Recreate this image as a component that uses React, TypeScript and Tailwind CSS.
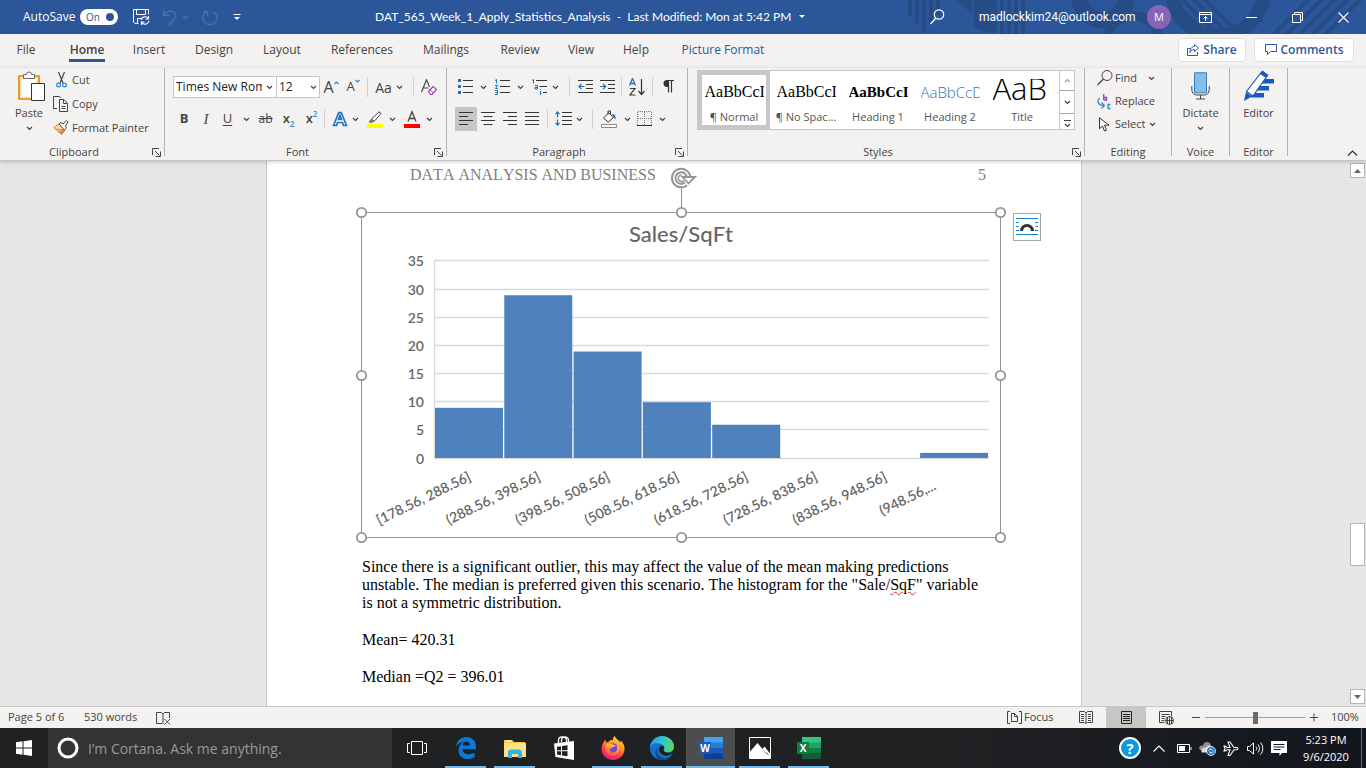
import { useState, type ReactNode } from "react";

/* ---------- small building blocks ---------- */

type IconProps = { w: number; h: number; children: ReactNode; className?: string };

function Icon({ w, h, children, className = "" }: IconProps) {
  return (
    <svg width={w} height={h} viewBox={`0 0 ${w} ${h}`} fill="none" aria-hidden="true" className={`block shrink-0 ${className}`}>
      {children}
    </svg>
  );
}

function Chevron({ className = "" }: { className?: string }) {
  return (
    <Icon w={7} h={5} className={className}>
      <path d="M1 1l2.5 2.5L6 1" stroke="currentColor" strokeWidth="1.2" />
    </Icon>
  );
}

function Tool({ label, className, children }: { label: string; className: string; children?: ReactNode }) {
  return (
    <button type="button" aria-label={label} className={`flex h-6 shrink-0 items-center justify-center ${className}`}>
      {children}
    </button>
  );
}

function Drop({ label, className = "w-5" }: { label: string; className?: string }) {
  return (
    <Tool label={label} className={className}>
      <Chevron />
    </Tool>
  );
}

function Sep({ className = "" }: { className?: string }) {
  return <span className={`h-5 w-px shrink-0 bg-[#d2d0ce] ${className}`} />;
}

function Group({ name, className, launcher, children }: { name: string; className: string; launcher?: boolean; children: ReactNode }) {
  return (
    <section aria-label={name} className={`flex h-[88px] shrink-0 flex-col border-r border-[#b5b3b1] ${className}`}>
      <div className="h-[76px] shrink-0">{children}</div>
      <div className={`relative flex h-4 shrink-0 items-center justify-center text-[11px] text-[#444] ${launcher ? "pr-4" : ""}`}>
        {name}
        {launcher && (
          <button type="button" aria-label={`${name} settings`} className="absolute right-[3px] top-1">
            <Icon w={9} h={9}>
              <path d="M.5 7V.5H7M3 3l4.500 4.500M8.500 3.500v5h-5" stroke="#444" />
            </Icon>
          </button>
        )}
      </div>
    </section>
  );
}

/* ---------- title bar ---------- */

function TitleBar() {
  const [autoSave, setAutoSave] = useState(true);
  return (
    <header className="relative flex h-[34px] shrink-0 items-center overflow-hidden bg-[#2b579a] text-[12px] text-white">
      <svg className="absolute right-0 top-0" width="466" height="34" fill="none" aria-hidden="true">
        <g fill="#264c86">
          <path d="M8 0h4v16H8zM15 0h4v23h-4zM22 0h4v32h-4zM29 0h4v24h-4zM36 0h4v15h-4zM56 0h16v14zM74 0h23v34c-9-1-16-3-23-8z" />
          <path d="M100 0h4v34h-4zM107 0h4v34h-4zM114 0h4v34h-4zM121 0h4v34h-4z" />
        </g>
        <g stroke="#264c86">
          <circle cx="203" cy="-4" r="24" strokeWidth="16" />
          <circle cx="233" cy="42" r="26" strokeWidth="9" />
          <circle cx="318" cy="-10" r="46" strokeWidth="14" />
          <path d="M270-2l40 40M281-2l40 40M292-2l40 40M303-2l36 36M372 36l38-38M385 36l38-38M398 36l38-38M411 36l38-38M424 36l38-38" strokeWidth="4" />
        </g>
      </svg>
      <label className="relative flex items-center pl-[23px]">
        <span className="w-[57px]">AutoSave</span>
        <input type="checkbox" checked={autoSave} onChange={() => setAutoSave(!autoSave)} className="sr-only" />
        <span className="flex h-4 w-[38px] items-center justify-between rounded-full bg-white pl-1.5 pr-1 text-[10px] text-[#2b579a]">
          {autoSave ? "On" : "Off"}
          <span className="size-2 rounded-full bg-[#2b579a]" />
        </span>
      </label>
      <div className="relative flex w-[257px] items-center">
        <button type="button" aria-label="Save" className="ml-[15px]">
          <Icon w={17} h={18}>
            <path d="M15.500 6.500v-5H.500V14l1.500 1.500h3.500M3.500 1.500v5h9v-5M4.500 15.500v-5H8" stroke="#fff" />
            <path d="M8 12a4 4 0 0 1 7.200-1.500M15.500 8v3h-3M16 13a4 4 0 0 1-7.200 1.500M8.500 17v-3h3" stroke="#fff" strokeWidth="1.200" />
          </Icon>
        </button>
        <button type="button" aria-label="Undo" className="ml-3 text-[#4a72ae]">
          <Icon w={16} h={17}>
            <path d="M1.500 1v5.500H7M1.500 6.500C4 3 7 1.500 10 2.200c4 1 5 5.500 2 8.500L7 16" stroke="currentColor" strokeWidth="1.300" />
          </Icon>
        </button>
        <Chevron className="ml-1 text-[#4a72ae]" />
        <button type="button" aria-label="Redo" className="ml-3 text-[#4a72ae]">
          <Icon w={18} h={17}>
            <path d="M5 3a7 7 0 1 0 8 0M2 2.500h4.500V7" stroke="currentColor" strokeWidth="1.300" />
          </Icon>
        </button>
        <button type="button" aria-label="Customize quick access" className="ml-[14px]">
          <Icon w={8} h={7}>
            <path d="M.500.500h7" stroke="#fff" />
            <path d="M1 3h6L4 6z" fill="#fff" />
          </Icon>
        </button>
      </div>
      <button type="button" className="relative flex items-center whitespace-pre font-['Lato',sans-serif]">
        <span>DAT_565_Week_1_Apply_Statistics_Analysis  -  Last Modified: Mon at 5:42 PM</span>
        <Icon w={6} h={4} className="ml-2">
          <path d="M0 0h6L3 3z" fill="#fff" />
        </Icon>
      </button>
      <div className="relative ml-auto flex items-center">
        <button type="button" aria-label="Search" className="w-[49px]">
          <Icon w={15} h={16}>
            <circle cx="9" cy="5.500" r="4.700" stroke="#fff" strokeWidth="1.200" />
            <path d="M5.700 9.200L.500 15" stroke="#fff" strokeWidth="1.300" />
          </Icon>
        </button>
        <span className="w-[168px] font-['Roboto',sans-serif]">madlockkim24@outlook.com</span>
        <button type="button" aria-label="Account" className="flex size-6 items-center justify-center rounded-full bg-[#8764b8] text-[11px]">
          M
        </button>
        <button type="button" aria-label="Ribbon display options" className="ml-7">
          <Icon w={13} h={11}>
            <path d="M.500.500h12v10H.500zM.500 2.500h12M6.500 9V4.500M4.500 6.500l2-2 2 2" stroke="#fff" />
          </Icon>
        </button>
        <button type="button" aria-label="Minimize" className="ml-[34px]">
          <Icon w={11} h={11}>
            <path d="M0 5.500h11" stroke="#fff" />
          </Icon>
        </button>
        <button type="button" aria-label="Restore" className="ml-[35px]">
          <Icon w={11} h={11}>
            <path d="M.500 2.500h8v8h-8zM2.500 2.500v-2h8v8h-2" stroke="#fff" />
          </Icon>
        </button>
        <button type="button" aria-label="Close" className="ml-[35px] mr-[17px]">
          <Icon w={11} h={11}>
            <path d="M.500.500l10 10M10.500.500l-10 10" stroke="#fff" strokeWidth="1.100" />
          </Icon>
        </button>
      </div>
    </header>
  );
}

/* ---------- tabs ---------- */

const TABS = [
  { name: "File", width: "w-[52px]" },
  { name: "Home", width: "w-[70px]" },
  { name: "Insert", width: "w-[54px]" },
  { name: "Design", width: "w-[76px]" },
  { name: "Layout", width: "w-[60px]" },
  { name: "References", width: "w-[100px]" },
  { name: "Mailings", width: "w-[68px]" },
  { name: "Review", width: "w-[80px]" },
  { name: "View", width: "w-[42px]" },
  { name: "Help", width: "w-[68px]" },
  { name: "Picture Format", width: "w-[106px]" },
];

function Tabs() {
  return (
    <nav className="flex h-[34px] shrink-0 items-center text-[12px] text-[#444]">
      {TABS.map((t) => (
        <button key={t.name} type="button" className={`flex h-7 shrink-0 justify-center ${t.width}`}>
          <span
            className={
              t.name === "Home"
                ? "h-[25px] border-b-[3px] border-[#2b579a] px-px pt-1 font-semibold leading-[18px]"
                : t.name === "Picture Format"
                  ? "pt-1 leading-[18px] text-[#2b579a]"
                  : "pt-1 leading-[18px]"
            }
          >
            {t.name}
          </span>
        </button>
      ))}
      <div className="ml-auto mr-3 flex gap-2 pb-0.5 font-semibold text-[#2b579a]">
        <button type="button" className="flex h-6 w-[68px] items-center justify-center gap-1 rounded-sm border border-[#e1dfdd] bg-white">
          <Icon w={12} h={12}>
            <path d="M3.500 4.500h-3v7h10V8M7.500.500L11.500 4l-4 3.500V5.500C5 5.500 4 6.500 3 8.500 3 5 4.500 2.500 7.500 2.500z" stroke="currentColor" />
          </Icon>
          Share
        </button>
        <button type="button" className="flex h-6 w-[100px] items-center justify-center gap-1 rounded-sm border border-[#e1dfdd] bg-white">
          <Icon w={12} h={12}>
            <path d="M.500.500h11v7h-6l-3 3v-3h-2z" stroke="currentColor" />
          </Icon>
          Comments
        </button>
      </div>
    </nav>
  );
}

/* ---------- ribbon groups ---------- */

function ClipboardGroup() {
  return (
    <Group name="Clipboard" className="w-[165px]" launcher>
      <div className="flex">
        <button type="button" className="ml-[11px] flex w-9 flex-col items-center pt-[3px]">
          <Icon w={29} h={31} className="ml-1">
            <path d="M2 5h20v23H2z" fill="#fbe6b0" stroke="#e8830c" strokeWidth="1.600" />
            <path d="M5 8h14v18H5z" fill="#fff" />
            <path d="M6.500 7.500v-4h3a2.500 2.500 0 0 1 5 0h3v4z" fill="#fff" stroke="#666" />
            <path d="M14.500 12.500h13v17h-13z" fill="#fff" stroke="#333" />
          </Icon>
          <span className="mt-[3px] h-4 leading-4">Paste</span>
          <Chevron className="mt-[5px]" />
        </button>
        <div className="ml-1.5 flex flex-col">
          <button type="button" className="flex h-6 items-center">
            <span className="w-[19px] pl-[3px]">
              <Icon w={11} h={16}>
                <path d="M2.500 0l4.700 11.500M8.500 0L3.800 11.500" stroke="#444" strokeWidth="1.200" />
                <circle cx="2.500" cy="13" r="1.900" stroke="#2b88d8" strokeWidth="1.200" />
                <circle cx="8.500" cy="13" r="1.900" stroke="#2b88d8" strokeWidth="1.200" />
              </Icon>
            </span>
            Cut
          </button>
          <button type="button" className="flex h-6 items-center">
            <span className="w-[19px]">
              <Icon w={16} h={16}>
                <path d="M4 12.500H.500V.500h6l1.500 1.500M11 3.500H6.500v12h8v-8zM10.500 3.500v4h4M8.500 10.500h4M8.500 12.500h4" stroke="#444" />
              </Icon>
            </span>
            Copy
          </button>
          <button type="button" className="flex h-6 items-center">
            <span className="w-[19px]">
              <Icon w={16} h={16}>
                <path d="M.800 7.500L6 4l6 6-3.500 4.500z" fill="#fbdcae" stroke="#e07b12" />
                <path d="M3.500 9l5.500 1M5.500 11.500l3.500.500M8.500 14.500L12 10 8 10z" stroke="#e07b12" fill="#f0963c" />
                <path d="M6 4l2-1.500 2 1.500L13.500.800l1.500 1L12.500 6l.800 2-2 2z" fill="#fff" stroke="#444" />
              </Icon>
            </span>
            Format Painter
          </button>
        </div>
      </div>
    </Group>
  );
}

function FontGroup() {
  return (
    <Group name="Font" className="w-[282px]" launcher>
      <div className="mt-[7px] flex h-6 items-center pl-2">
        <label className="relative block h-[22px] w-[104px] shrink-0">
          <span className="sr-only">Font name</span>
          <select className="block h-[22px] w-full appearance-none border border-[#c8c6c4] bg-white pl-0.5 pr-3.5 text-[12px] leading-5 text-[#222]">
            <option>Times New Roman</option>
          </select>
          <Chevron className="absolute right-1 top-[9px]" />
        </label>
        <label className="relative -ml-px block h-[22px] w-11 shrink-0">
          <span className="sr-only">Font size</span>
          <select className="block h-[22px] w-full appearance-none border border-[#c8c6c4] bg-white pl-0.5 pr-3.5 text-[12px] leading-5 text-[#222]">
            <option>12</option>
          </select>
          <Chevron className="absolute right-[3px] top-[9px]" />
        </label>
        <Tool label="Increase font size" className="ml-[3px] w-4 text-[16px]">
          A
          <Icon w={5} h={4} className="-mt-2">
            <path d="M.500 3L2.500 1l2 2" stroke="#2b88d8" strokeWidth="1.200" />
          </Icon>
        </Tool>
        <Tool label="Decrease font size" className="ml-1.5 w-4 text-[13px]">
          A
          <Icon w={5} h={4} className="-mt-3">
            <path d="M.500 1L2.500 3l2-2" stroke="#2b88d8" strokeWidth="1.200" />
          </Icon>
        </Tool>
        <Sep className="ml-1.5" />
        <Tool label="Change case" className="ml-[7px] w-[17px] text-[14px]">Aa</Tool>
        <Drop label="Change case options" className="ml-px w-3" />
        <Sep className="ml-2" />
        <Tool label="Clear formatting" className="ml-[7px] w-4">
          <Icon w={16} h={16}>
            <path d="M.500 13L5.500.800 8.500 8M2.200 9h5" stroke="#444" strokeWidth="1.200" />
            <path d="M7.500 12.500L12 7.500l3.500 3-4.500 5H9.500z" fill="#fff" stroke="#9b3fb5" strokeWidth="1.200" />
            <path d="M9 10.500l3.500 3.500" stroke="#9b3fb5" />
          </Icon>
        </Tool>
      </div>
      <div className="mt-2 flex h-6 items-center pl-2">
        <Tool label="Bold" className="w-[22px] text-[13px] font-bold">B</Tool>
        <Tool label="Italic" className="w-[22px] font-['Liberation_Serif',serif] text-[15px] italic">I</Tool>
        <Tool label="Underline" className="w-[21px] text-[13px] underline underline-offset-2">U</Tool>
        <Drop label="Underline options" className="w-4" />
        <Tool label="Strikethrough" className="w-[23px] text-[12px] line-through">ab</Tool>
        <Tool label="Subscript" className="w-[23px] text-[13px] font-semibold">
          x<span className="mt-2.5 text-[8px] text-[#2b88d8]">2</span>
        </Tool>
        <Tool label="Superscript" className="w-[23px] text-[13px] font-semibold">
          x<span className="-mt-2.5 text-[8px] text-[#2b88d8]">2</span>
        </Tool>
        <Sep className="ml-px" />
        <Tool label="Text effects" className="ml-[7px] w-4">
          <Icon w={16} h={16}>
            <path d="M1.500 14.500L6.800 1.500h2.400l5.300 13h-3l-1-3h-5l-1 3zM6.500 8.500h3L8 4.500z" fill="#fff" stroke="#1e73be" strokeWidth="1.700" />
          </Icon>
        </Tool>
        <Drop label="Text effects options" className="w-3.5" />
        <Tool label="Highlight" className="ml-[5px] w-4">
          <Icon w={16} h={18}>
            <path d="M0 14h16v4H0z" fill="#ffff00" />
            <path d="M2.500 12L5 8.500 12 1.800l2 1.500L8 10.500 5 12z" fill="#fff" stroke="#444" />
            <path d="M2 12.500L5 8.500l2.500 2.500L5 12.500z" fill="#777" />
          </Icon>
        </Tool>
        <Drop label="Highlight colors" className="w-[18px]" />
        <Tool label="Font color" className="ml-[3px] w-4">
          <Icon w={16} h={18}>
            <path d="M0 14h16v4H0z" fill="#ff0000" />
            <path d="M4 11.500L8 1.800l4 9.700M5.200 8.500h5.600" stroke="#444" strokeWidth="1.300" />
          </Icon>
        </Tool>
        <Drop label="Font colors" className="w-[18px]" />
      </div>
    </Group>
  );
}

const ALIGN = {
  left: "M0 .500h14M0 4.500h9M0 8.500h14M0 12.500h9",
  center: "M0 .500h14M2.500 4.500h9M0 8.500h14M2.500 12.500h9",
  right: "M0 .500h14M5 4.500h9M0 8.500h14M5 12.500h9",
  justify: "M0 .500h14M0 4.500h14M0 8.500h14M0 12.500h14",
};

function AlignIcon({ d }: { d: string }) {
  return (
    <Icon w={14} h={14}>
      <path d={d} stroke="#333" />
    </Icon>
  );
}

function ParagraphGroup() {
  return (
    <Group name="Paragraph" className="w-[241px]" launcher>
      <div className="mt-[7px] flex h-6 items-center pl-[11px]">
        <Tool label="Bullets" className="w-[15px]">
          <Icon w={15} h={16}>
            <path d="M0 0h3v3H0zM0 6h3v3H0zM0 12h3v3H0z" fill="#1e73be" />
            <path d="M5 1.500h10M5 7.500h10M5 13.500h10" stroke="#333" />
          </Icon>
        </Tool>
        <Drop label="Bullet options" />
        <Tool label="Numbering" className="ml-0.5 w-[15px]">
          <Icon w={15} h={16}>
            <path d="M0 1.500L1.500.500v4M0 6.500h2.500L.500 9.500h2.500M0 11.500h2.500v4H0M.500 13.500h2" stroke="#1e73be" />
            <path d="M5 1.500h10M5 7.500h10M5 13.500h10" stroke="#333" />
          </Icon>
        </Tool>
        <Drop label="Numbering options" />
        <Tool label="Multilevel list" className="ml-0.5 w-[15px]">
          <Icon w={15} h={16}>
            <path d="M0 1.500L1.500.500v4M3 6.500h2.500v3.500H3V8.500h2M8.500 12v4M8.500 10v1" stroke="#1e73be" />
            <path d="M4 1.500h11M7.500 7.500H15M11 13.500h4" stroke="#333" />
          </Icon>
        </Tool>
        <Drop label="Multilevel options" className="w-4" />
        <Sep className="ml-1.5" />
        <Tool label="Decrease indent" className="ml-2 w-[15px]">
          <Icon w={15} h={14}>
            <path d="M0 .500h15M8 4.500h7M8 8.500h7M0 12.500h15" stroke="#333" />
            <path d="M6.500 6.500H.800M3.500 4L.800 6.500 3.500 9" stroke="#1e73be" strokeWidth="1.200" />
          </Icon>
        </Tool>
        <Tool label="Increase indent" className="ml-[7px] w-[15px]">
          <Icon w={15} h={14}>
            <path d="M0 .500h15M8 4.500h7M8 8.500h7M0 12.500h15" stroke="#333" />
            <path d="M0 6.500h5.700M3 4l2.700 2.500L3 9" stroke="#1e73be" strokeWidth="1.200" />
          </Icon>
        </Tool>
        <Sep className="ml-1.5" />
        <Tool label="Sort" className="ml-[7px] w-[17px]">
          <Icon w={17} h={18}>
            <path d="M.500 7.500L3.500.500l3 7M1.500 5.500h4" stroke="#1e73be" strokeWidth="1.300" />
            <path d="M1 10.500h5L1 17h5.500" stroke="#333" strokeWidth="1.200" />
            <path d="M12.500 1v15.500M9.500 13l3 3.500 3-3.500" stroke="#333" strokeWidth="1.200" />
          </Icon>
        </Tool>
        <Sep className="ml-1.5" />
        <Tool label="Show formatting marks" className="ml-2.5 w-[11px]">
          <Icon w={11} h={14}>
            <path d="M5.500.500v12M8.500.500v12M4 .500h7" stroke="#333" strokeWidth="1.200" />
            <path d="M5.500 0H4a3.400 3.400 0 0 0 0 7h1.500z" fill="#333" />
          </Icon>
        </Tool>
      </div>
      <div className="mt-2 flex h-6 items-center pl-2">
        <Tool label="Align left" className="w-[22px] bg-[#c8c6c4]"><AlignIcon d={ALIGN.left} /></Tool>
        <Tool label="Center" className="w-[22px]"><AlignIcon d={ALIGN.center} /></Tool>
        <Tool label="Align right" className="w-[22px]"><AlignIcon d={ALIGN.right} /></Tool>
        <Tool label="Justify" className="w-[22px]"><AlignIcon d={ALIGN.justify} /></Tool>
        <Sep className="ml-1" />
        <Tool label="Line spacing" className="ml-[7px] w-[17px]">
          <Icon w={17} h={16}>
            <path d="M7 1.500h10M7 5.500h10M7 9.500h10M7 13.500h10" stroke="#333" />
            <path d="M2.500 6.500V1M.500 3.200L2.500 1l2 2.200M2.500 8.500V14M.500 11.800l2 2.200 2-2.200" stroke="#1e73be" strokeWidth="1.200" />
          </Icon>
        </Tool>
        <Drop label="Line spacing options" className="w-3.5" />
        <Sep className="ml-1.5" />
        <Tool label="Shading" className="ml-[7px] w-[17px]">
          <Icon w={16} h={18}>
            <path d="M.500 14.500h15v3H.500z" fill="#fff" stroke="#8a8886" />
            <path d="M2.500 8L8 2.700l4.200 5-5 4.300zM7 4.500V1h2.500v3.500" stroke="#333" fill="#fff" />
            <path d="M11 4c3 0 4 2 3.500 5.500l-2-2.500z" fill="#1e73be" />
          </Icon>
        </Tool>
        <Drop label="Shading colors" />
        <Tool label="Borders" className="w-[15px]">
          <Icon w={15} h={16}>
            <path d="M.500 14V.500h14V14M7.500 1v13M1 7.500h13" stroke="#777" strokeDasharray="1 1" />
            <path d="M0 14.500h15" stroke="#333" />
          </Icon>
        </Tool>
        <Drop label="Border options" />
      </div>
    </Group>
  );
}

const STYLES = [
  { name: "¶ Normal", sample: "AaBbCcI", look: "font-['Liberation_Serif',serif] text-[16px] text-black" },
  { name: "¶ No Spac...", sample: "AaBbCcI", look: "font-['Liberation_Serif',serif] text-[16px] text-black" },
  { name: "Heading 1", sample: "AaBbCcI", look: "font-['Liberation_Serif',serif] text-[15px] font-bold text-black" },
  { name: "Heading 2", sample: "AaBbCcD", look: "font-['Open_Sans',sans-serif] text-[15px] font-light text-[#2e74b5]" },
  { name: "Title", sample: "AaB", look: "pb-2 font-['Open_Sans',sans-serif] text-[31px] font-light leading-none text-black" },
];

function StylesGroup() {
  return (
    <Group name="Styles" className="w-[397px]" launcher>
      <div className="ml-[9px] mt-0.5 flex h-[60px] w-[378px] border border-[#c8c6c4] bg-white">
        {STYLES.map((s, i) => (
          <button
            key={s.name}
            type="button"
            className={`flex h-[58px] w-[72px] shrink-0 flex-col items-center ${i === 0 ? "border-4 border-[#c6c6c6] pt-1" : "pt-2"}`}
          >
            <span className={`flex h-[26px] w-[59px] shrink-0 items-center overflow-hidden whitespace-nowrap ${s.look}`}>{s.sample}</span>
            <span className="mt-1 h-4 shrink-0 whitespace-nowrap leading-4 text-[#555]">{s.name}</span>
          </button>
        ))}
        <div className="ml-auto flex w-[15px] flex-col border-l border-[#c8c6c4]">
          <Tool label="Previous styles" className="h-[19px] text-[#a19f9d]"><Chevron className="rotate-180" /></Tool>
          <Tool label="Next styles" className="h-5 border-y border-[#a8a6a4]"><Chevron /></Tool>
          <Tool label="More styles" className="h-[19px] flex-col gap-0.5">
            <span className="h-px w-[7px] bg-[#444]" />
            <Chevron />
          </Tool>
        </div>
      </div>
    </Group>
  );
}

function EditingGroups() {
  return (
    <>
      <Group name="Editing" className="w-[87px]">
        <div className="-mt-0.5 flex flex-col pl-3">
          <button type="button" className="flex h-6 items-center">
            <span className="w-[18px]">
              <Icon w={16} h={16}>
                <circle cx="10" cy="5.500" r="5" stroke="#444" />
                <path d="M6.500 9L.500 15" stroke="#444" strokeWidth="1.200" />
              </Icon>
            </span>
            <span className="w-[33px] text-left">Find</span>
            <Chevron />
          </button>
          <button type="button" className="flex h-[23px] items-center">
            <span className="w-[18px]">
              <Icon w={15} h={16}>
                <path d="M6.700 0v6M6.700 3.500h2.800V6H6.700" stroke="#9b3fb5" strokeWidth="1.300" />
                <path d="M13.500 10.500H11v4h2.500" stroke="#2b88d8" strokeWidth="1.300" />
                <path d="M2.500 4c-3 3-1.500 7.500 4.500 7.500M4.500 8.500l3 3-3 3" stroke="#2b88d8" strokeWidth="1.200" />
              </Icon>
            </span>
            Replace
          </button>
          <button type="button" className="flex h-[23px] items-center">
            <span className="w-[18px] pl-0.5">
              <Icon w={11} h={15}>
                <path d="M.500.800v11L3.500 9l2 5 2-.800-2-5H10z" fill="#fff" stroke="#333" />
              </Icon>
            </span>
            <span className="mr-1">Select</span>
            <Chevron />
          </button>
        </div>
      </Group>
      <Group name="Voice" className="w-[58px]">
        <button type="button" className="mx-auto flex flex-col items-center pt-1">
          <Icon w={19} h={28}>
            <path d="M.800 14v3.500c0 3.500 2 5.500 5 5.500h7.400c3 0 5-2 5-5.500V14M9.500 23v4M5 27h9" stroke="#444" />
            <path d="M3.500.800h12v20h-12z" fill="#83beec" stroke="#2b7cc0" />
          </Icon>
          <span className="mt-[5px] h-4 leading-4">Dictate</span>
          <Chevron className="mt-[5px]" />
        </button>
      </Group>
      <Group name="Editor" className="w-[58px]">
        <button type="button" className="mx-auto flex flex-col items-center pt-0.5">
          <Icon w={30} h={32}>
            <path d="M17 9h13v4.500H16zM12 16h13v4.500H12zM7 23h13v4.500H7z" fill="#185abd" />
            <path d="M2.500 21.500L17.500 2l5.500 4L9 26z" fill="#fff" stroke="#185abd" strokeWidth="1.200" />
            <path d="M16 4l2.500-3.500 6 4.500L22 8zM2 22l6 4.500L0 31z" fill="#185abd" />
          </Icon>
          <span className="mt-[3px] h-4 leading-4">Editor</span>
        </button>
      </Group>
    </>
  );
}

/* ---------- chart ---------- */

const BINS = [
  { label: "[178.56, 288.56]", value: 9 },
  { label: "(288.56, 398.56]", value: 29 },
  { label: "(398.56, 508.56]", value: 19 },
  { label: "(508.56, 618.56]", value: 10 },
  { label: "(618.56, 728.56]", value: 6 },
  { label: "(728.56, 838.56]", value: 0 },
  { label: "(838.56, 948.56]", value: 0 },
  { label: "(948.56,...", value: 1 },
];
const TICKS = [0, 5, 10, 15, 20, 25, 30, 35];
const HANDLES = [[6, 6], [326, 6], [645, 6], [6, 169], [645, 169], [6, 331], [326, 331], [645, 331]];

function Histogram() {
  const y = (v: number) => 252.5 - v * 5.63;
  return (
    <svg width="652" height="338" viewBox="0 0 652 338" role="img" aria-label="Sales/SqFt histogram" className="block">
      <path d="M6.500 6.500h639v325H6.500z" fill="#fff" stroke="#949494" />
      <g fontFamily="Lato, sans-serif" fill="#666">
        <text x="326" y="36" textAnchor="middle" fontSize="22" fontWeight="500">Sales/SqFt</text>
        <g fontSize="14" fontWeight="600">
          {TICKS.map((t) => (
            <text key={t} x="69" y={y(t) + 5} textAnchor="end">{t}</text>
          ))}
        </g>
        {BINS.map((b, i) => {
          const last = i === BINS.length - 1;
          const px = last ? 582 : 117 + i * 69.3;
          const py = last ? 283 : 274;
          return (
            <text key={b.label} x={px} y={py} textAnchor="end" fontSize="14" fontWeight="600" transform={`rotate(-26 ${px} ${py})`}>
              {b.label}
            </text>
          );
        })}
      </g>
      <path d={TICKS.map((t) => `M79 ${Math.round(y(t)) - 0.5}h555`).join("") + "M79.500 55v198"} stroke="#d9d9d9" strokeWidth="1.300" />
      {BINS.map((b, i) => (
        <rect key={b.label} x={80 + i * 69.3} y={y(b.value)} width="68" height={252 - y(b.value) > 0 ? 252 - y(b.value) : 0} fill="#4f81bd" />
      ))}
      {HANDLES.map(([cx, cy]) => (
        <circle key={`${cx}-${cy}`} cx={cx + 0.5} cy={cy + 0.5} r="4.700" fill="#fff" stroke="#949494" strokeWidth="1.800" />
      ))}
    </svg>
  );
}

function Picture() {
  return (
    <figure className="relative -ml-[7px] h-[338px] w-[652px]">
      <Histogram />
      <div className="absolute -top-10 left-[316px]">
        <Icon w={26} h={42}>
          <path d="M10.500 22v20" stroke="#949494" />
          <path d="M15 17.800A7.500 7.500 0 1 1 17.700 12" stroke="#949494" strokeWidth="5.500" />
          <path d="M10.500 9A3.300 3.300 0 1 0 13 14.500" stroke="#949494" strokeWidth="1.500" />
          <path d="M15 17.800A7.500 7.500 0 1 1 17.700 12" stroke="#fff" strokeWidth="1.500" />
          <path d="M11.500 11H24l-6.500 6.500z" fill="#fff" stroke="#949494" strokeWidth="1.800" />
        </Icon>
      </div>
      <button type="button" aria-label="Layout options" className="absolute left-[658px] top-[7px] flex size-7 items-center justify-center border border-[#a6a6a6] bg-white">
        <Icon w={22} h={18}>
          <path d="M0 .500h22M0 4.500h3M19 4.500h3M0 8.500h2.500M19.500 8.500H22M0 12.500h3M19 12.500h3M0 16.500h22" stroke="#0f83cf" />
          <path d="M5.500 13a5.500 5.500 0 0 1 11 0" stroke="#333" strokeWidth="3.200" />
        </Icon>
      </button>
    </figure>
  );
}

/* ---------- document ---------- */

function Document() {
  return (
    <div className="flex min-h-0 flex-1 bg-[#e6e6e6]">
      <main className="min-w-0 flex-1 overflow-hidden">
        <article className="mx-auto h-full w-[816px] overflow-hidden border-x border-[#c6c6c6] bg-white px-[95px] font-['Liberation_Serif',serif] text-[16px] leading-[18px] text-black [font-kerning:none]">
          <div className="flex h-[45px] justify-between pl-12 pt-[5px] text-[#808080]">
            <span>DATA ANALYSIS AND BUSINESS</span>
            <span>5</span>
          </div>
          <Picture />
          <p className="mt-[14px]">
            Since there is a significant outlier, this may affect the value of the mean making predictions unstable. The median is preferred given this
            scenario. The histogram for the "Sale/<span className="underline decoration-[#e03030] decoration-wavy decoration-1 underline-offset-1">SqF</span>" variable is not a symmetric distribution.
          </p>
          <p className="mt-[19px]">Mean= 420.31</p>
          <p className="mt-[19px]">Median =Q2 = 396.01</p>
        </article>
      </main>
      <div className="flex w-[18px] shrink-0 flex-col items-end pb-0.5 pr-px pt-0.5" aria-hidden="true">
        <span className="flex h-[15px] w-[15px] items-center justify-center border border-[#b5b5b5] bg-white">
          <Icon w={7} h={4}><path d="M0 4l3.500-4L7 4z" fill="#666" /></Icon>
        </span>
        <span className="mt-[345px] h-[43px] w-[15px] border border-[#b5b5b5] bg-white" />
        <span className="mt-auto flex h-[15px] w-[15px] items-center justify-center border border-[#b5b5b5] bg-white">
          <Icon w={7} h={4}><path d="M0 0l3.500 4L7 0z" fill="#666" /></Icon>
        </span>
      </div>
    </div>
  );
}

/* ---------- status bar ---------- */

function StatusBar() {
  return (
    <footer className="flex h-[22px] shrink-0 items-center border-t border-[#c8c6c4] bg-[#f3f2f1] pl-2 text-[11px] text-[#444]">
      <span className="w-[76px]">Page 5 of 6</span>
      <span className="w-[72px]">530 words</span>
      <button type="button" aria-label="Proofing">
        <Icon w={15} h={14}>
          <path d="M6.500 12.500h-6V1.500h5l1.500 1.500V13M7 3l1.500-1.500h5V7M8.500 8l5.500 5.500M14 8l-5.500 5.500" stroke="#444" />
        </Icon>
      </button>
      <button type="button" className="ml-auto flex w-[62px] items-center gap-0.5">
        <Icon w={15} h={13}>
          <path d="M3 .500H.500v12H3M12 .500h2.500v12H12M4.500 10.500v-8h3l3 3v5zM7.500 2.500v3h3" stroke="#444" />
        </Icon>
        Focus
      </button>
      <button type="button" aria-label="Read mode" className="mr-[3px] flex w-[34px] items-center justify-center">
        <Icon w={14} h={13}>
          <path d="M7 2L5.500.500h-5v11h5L7 12.500l1.500-1h5v-11h-5zM7 2v10M2 3.500h3M2 5.500h3M2 7.500h3M2 9.500h3M9 3.500h3M9 5.500h3M9 7.500h3M9 9.500h3" stroke="#444" />
        </Icon>
      </button>
      <button type="button" aria-label="Print layout" className="flex h-[21px] w-10 items-center justify-center bg-[#c8c6c4]">
        <Icon w={11} h={13}>
          <path d="M.500.500h10v12H.500zM2 3.500h7M2 5.500h7M2 7.500h7M2 9.500h7" stroke="#222" />
        </Icon>
      </button>
      <button type="button" aria-label="Web layout" className="flex w-10 items-center justify-center">
        <Icon w={15} h={14}>
          <path d="M12.500 5V.500H.500v11h5M2.500 3.500h8M2.500 5.500h4M2.500 7.500h3M2.500 9.500h3" stroke="#444" />
          <circle cx="10.500" cy="9.500" r="4" fill="#fff" stroke="#444" />
          <path d="M6.500 9.500h8M10.500 5.500v8M8.500 6v7M12.500 6v7" stroke="#444" />
        </Icon>
      </button>
      <button type="button" aria-label="Zoom out" className="ml-1.5 w-[13px]">
        <Icon w={8} h={9}><path d="M0 4.500h8" stroke="#444" /></Icon>
      </button>
      <input
        type="range"
        aria-label="Zoom"
        min={0}
        max={100}
        defaultValue={50}
        className="h-3 w-[100px] appearance-none bg-[linear-gradient(#a19f9d,#a19f9d)] bg-[length:100%_1px] bg-center bg-no-repeat [&::-webkit-slider-thumb]:h-3 [&::-webkit-slider-thumb]:w-[5px] [&::-webkit-slider-thumb]:appearance-none [&::-webkit-slider-thumb]:bg-[#6b6a69]"
      />
      <button type="button" aria-label="Zoom in" className="ml-[5px] w-[21px]">
        <Icon w={8} h={9}><path d="M0 4.500h8M4 .500v8" stroke="#444" /></Icon>
      </button>
      <span className="w-[35px]">100%</span>
    </footer>
  );
}

/* ---------- taskbar ---------- */

function EdgeLegacy() {
  return (
    <Icon w={20} h={22}>
      <path d="M0 9.500C1 3.500 5 0 10.500 0 16.500 0 20 4.200 20 10v2.200H6.500c.200 3.300 3 5 6.200 5 2.300 0 4.200-.600 5.800-1.500v4.500C16.600 21.400 14.300 22 11.800 22 6 22 2.500 18.500 2.500 13.500c0-3.700 1.800-6.700 5-8.500C4.300 5.200 2 6.800 0 9.500zM6.700 8.500h7.100c0-2.500-1.200-4-3.400-4-2 0-3.300 1.400-3.700 4z" fill="#0a78d7" />
    </Icon>
  );
}

function Folder() {
  return (
    <Icon w={22} h={19}>
      <path d="M0 1h8l2 2h11v14H0z" fill="#f5c84c" />
      <path d="M0 4h22v14H0z" fill="#fde08a" />
      <path d="M2 1.500h5v1.300H2z" fill="#fff" />
      <path d="M4 19v-6.500L6 10.500h10l2 2V19h-4v-4H8v4z" fill="#2fb4e9" />
    </Icon>
  );
}

function Store() {
  return (
    <Icon w={22} h={24}>
      <path d="M5.500 7V4c0-4 7-4.500 8 0v2M8.500 6.500V4c0-4 6-4 7-.500V6" stroke="#fff" strokeWidth="1.300" />
      <path d="M1 7.500L21 5v19L2.500 21z" fill="#fff" />
      <path d="M4 10.700l4-.500v4H4zM9 10l5.500-.700v4.900H9zM4 15.200h4v4l-4-.600zM9 15.200h5.500v5L9 19.400z" fill="#1f2022" />
    </Icon>
  );
}

function Firefox() {
  return (
    <Icon w={24} h={24}>
      <defs>
        <linearGradient id="ff" x1="0.800" y1="0" x2="0.300" y2="1">
          <stop offset="0" stopColor="#ffe04a" />
          <stop offset="0.400" stopColor="#ff9420" />
          <stop offset="0.700" stopColor="#ff3750" />
          <stop offset="1" stopColor="#e31587" />
        </linearGradient>
        <linearGradient id="fi" x1="0.700" y1="0" x2="0.300" y2="1">
          <stop offset="0" stopColor="#ffd23c" />
          <stop offset="0.600" stopColor="#ff7a2a" />
          <stop offset="1" stopColor="#ff3d55" />
        </linearGradient>
      </defs>
      <path d="M4 3.500l1.500 3L8 5.500C9 3.500 11.500 4 12 4c-.500-1.500.500-3 2-4 .500 3 4 4 5.500 6.500l.500-2c2.500 3 4 6 3.500 9.500C22.800 19.700 18 24 12 24S.800 19.500.500 13.500C.300 9.500 2 7 3 6z" fill="url(#ff)" />
      <circle cx="12" cy="12.500" r="5.200" fill="#7543e5" />
      <path d="M5 8.500c3-1.500 5 0 7 0l3 1-3.500 2c-1.500.500-2.500 1-2.500 1.500-.500 3 2 4 4 3.500 3-1 4-4 2.500-8 4 3 3 9-.500 10.500-4 2.500-9 1-10.500-3-1-2.500-.500-5.500 0-7.500z" fill="url(#fi)" />
    </Icon>
  );
}

function EdgeNew() {
  return (
    <Icon w={24} h={24}>
      <defs>
        <linearGradient id="eg" x1="0" y1="0.300" x2="1" y2="0.400">
          <stop offset="0" stopColor="#1f9de0" />
          <stop offset="0.500" stopColor="#2cc3d8" />
          <stop offset="1" stopColor="#5fd95a" />
        </linearGradient>
      </defs>
      <path d="M0 12C0 5 5.500 0 12 0s12 4.500 12 10.500c0 4-3 6-6.500 6-2.500 0-4.500-1-4-2.500 1-1.500 1-3 0-4.500L0 13z" fill="url(#eg)" />
      <path d="M0 12C1 7.500 6 6.500 9.500 7.500c3.500 1 5.500 3.500 4.500 6-.800 1 .500 3.500 4 3.500 2 0 4-.500 5-1.200C21.500 21 17 24 12 24 5.500 24 0 19 0 12z" fill="#1470c8" />
      <path d="M8 11c-2 4 0 9 4.500 10.800 3.500 1.300 7-.300 9.500-2.800C19 24 13.500 24.700 9.500 23.700 4.500 22 4.500 14 8 11z" fill="#114a8b" />
      <path d="M9.500 11c1-2 4.500-1.500 4.500 1 0 1-1 2 0 3.300 2 2.200 6 2 9 .700-3 5-10 4.500-12.500 1-1.500-2-2-4-1-6z" fill="#1f2022" />
    </Icon>
  );
}

function OfficeTile({ letter, top, mid, low, base, badge }: { letter: string; top: string; mid: string; low: string; base: string; badge: string }) {
  return (
    <Icon w={24} h={22}>
      <path d="M5 0h19v6H5z" fill={top} />
      <path d="M5 5.500h19V11H5z" fill={mid} />
      <path d="M5 11h19v5.500H5z" fill={low} />
      <path d="M5 16.500h19V22H5z" fill={base} />
      <path d="M0 5h12v12H0z" fill={badge} />
      <text x="6" y="15" textAnchor="middle" fontSize="10" fontWeight="700" fill="#fff" fontFamily="Open Sans, sans-serif">{letter}</text>
    </Icon>
  );
}

function Photos() {
  return (
    <Icon w={22} h={22}>
      <path d="M.500.500h21v21H.500z" stroke="#fff" />
      <path d="M1 14.500L8.500 6l5 6 2-2.500 5.500 7v5H1z" fill="#fff" />
      <path d="M14 13l3 3.500 1-1 2 3" fill="#1f2022" />
    </Icon>
  );
}

const APPS = [
  { name: "Microsoft Edge Legacy", icon: <EdgeLegacy />, open: true },
  { name: "File Explorer", icon: <Folder />, open: true },
  { name: "Microsoft Store", icon: <Store />, open: false },
  { name: "Firefox", icon: <Firefox />, open: true },
  { name: "Microsoft Edge", icon: <EdgeNew />, open: true },
  { name: "Word", icon: <OfficeTile letter="W" top="#41a5ee" mid="#2b7cd3" low="#185abd" base="#103f91" badge="#185abd" />, open: true, active: true },
  { name: "Photos", icon: <Photos />, open: true },
  { name: "Excel", icon: <OfficeTile letter="X" top="#33c481" mid="#21a366" low="#107c41" base="#185c37" badge="#107c41" />, open: true },
];

function Taskbar() {
  return (
    <div className="flex h-10 shrink-0 items-center bg-linear-to-r from-[#202123] via-[#202123] via-70% to-[#12161d] text-white">
      <button type="button" aria-label="Start" className="flex h-10 w-12 shrink-0 items-center justify-center">
        <Icon w={16} h={16}>
          <path d="M0 2.200l6.500-.900v6.200H0zM7.500 1.200L16 0v7.500H7.500zM0 8.500h6.500v6.200L0 13.800zM7.500 8.500H16V16l-8.500-1.200z" fill="#fff" />
        </Icon>
      </button>
      <label className="flex h-10 w-[344px] shrink-0 items-center bg-[#333] pl-[9px]">
        <span className="sr-only">Search</span>
        <Icon w={22} h={22}>
          <circle cx="11" cy="11" r="9" stroke="#fff" strokeWidth="3" />
        </Icon>
        <input type="text" placeholder="I’m Cortana. Ask me anything." className="ml-[9px] w-full bg-transparent text-[14px] outline-none placeholder:text-[#9a9a9a]" />
      </label>
      <button type="button" aria-label="Task view" className="flex h-10 w-[49px] shrink-0 items-center justify-center">
        <Icon w={20} h={14}>
          <path d="M4.500.500h11v13h-11zM3 2.500H.500v9H3M17 2.500h2.500v9H17" stroke="#fff" />
        </Icon>
      </button>
      {APPS.map((a) => (
        <button
          key={a.name}
          type="button"
          aria-label={a.name}
          className={`relative flex h-10 w-[49px] shrink-0 items-center justify-center ${a.active ? "bg-[#4c4d4f]" : ""}`}
        >
          {a.icon}
          {a.open && <span className={`absolute bottom-0 h-0.5 bg-[#76b9ed] ${a.active ? "inset-x-0" : "inset-x-1"}`} />}
        </button>
      ))}
      <div className="ml-auto flex items-center">
        <button type="button" aria-label="Get help" className="w-[34px]">
          <Icon w={22} h={22}>
            <circle cx="11" cy="11" r="10" fill="#0a9ade" stroke="#fff" strokeWidth="2" />
            <text x="11" y="16.500" textAnchor="middle" fontSize="15" fontWeight="700" fill="#fff" fontFamily="Open Sans, sans-serif">?</text>
          </Icon>
        </button>
        <button type="button" aria-label="Show hidden icons" className="w-6">
          <Icon w={12} h={7}><path d="M.500 6.500L6 1l5.500 5.500" stroke="#fff" strokeWidth="1.200" /></Icon>
        </button>
        <button type="button" aria-label="Battery" className="w-[22px]">
          <Icon w={15} h={9}>
            <path d="M.500.500h12v8H.500zM14 3v3" stroke="#fff" />
            <path d="M2 2h6v5H2z" fill="#fff" />
          </Icon>
        </button>
        <button type="button" aria-label="OneDrive" className="w-6">
          <Icon w={18} h={15}>
            <path d="M4 4.500C5 0 11 0 12 4l-4 5H1C-1 6 1 4 4 4.500z" fill="#8f8f8f" />
            <path d="M3 11.500C1 9 4 6 7 7c1-3.500 6-3 7 0 2 1 2 3 1 4.500z" fill="#ddd" />
            <circle cx="12" cy="10" r="4.500" fill="#1e73d0" stroke="#fff" strokeWidth=".8" />
            <path d="M9.800 9.500c1-2 3-2 4 0M14.200 10.500c-1 2-3 2-4 0" stroke="#fff" />
          </Icon>
        </button>
        <button type="button" aria-label="Airplane mode" className="w-6">
          <Icon w={16} h={15}>
            <path d="M1 5h1.500L4 6.500h3L5 1h2l4 5.500h2.500c2 .300 2 2 0 2.200H11L7 14.500H5l2-5.800H4L2.500 10H1l1-2.500z" stroke="#fff" strokeWidth="1.100" />
          </Icon>
        </button>
        <button type="button" aria-label="Volume" className="w-6">
          <Icon w={17} h={13}>
            <path d="M.500 4.500h2l4-3.500v11l-4-3.500h-2zM9 4.500c1 1.200 1 2.800 0 4M11 2.500c2 2.200 2 5.800 0 8M13.500.500c3 3.200 3 8.800 0 12" stroke="#fff" />
          </Icon>
        </button>
        <button type="button" aria-label="Notifications" className="w-[29px]">
          <Icon w={16} h={15}>
            <path d="M0 0h16v12h-5l-2.500 3v-3H0z" fill="#fff" />
            <path d="M2.500 3.500h11M2.500 6h11M2.500 8.500h7" stroke="#1a1c20" />
          </Icon>
        </button>
        <div className="flex w-[52px] flex-col items-center text-[11px] leading-[17px]">
          <span>5:23 PM</span>
          <span>9/6/2020</span>
        </div>
        <span className="ml-[9px] mr-1 h-10 w-px bg-[#66686b]" />
      </div>
    </div>
  );
}

export default function App() {
  return (
    <div className="flex h-screen flex-col overflow-hidden bg-[#f3f2f1] font-['Open_Sans','Noto_Sans',sans-serif] text-[11px] text-[#444]">
      <TitleBar />
      <Tabs />
      <div className="relative z-10 flex h-[93px] shrink-0 border-b border-[#c8c6c4] shadow-[0_1px_4px_rgba(0,0,0,0.2)]">
        <ClipboardGroup />
        <FontGroup />
        <ParagraphGroup />
        <StylesGroup />
        <EditingGroups />
        <button type="button" aria-label="Collapse the ribbon" className="mb-1 ml-auto mr-2 self-end">
          <Icon w={11} h={6}><path d="M1 5.500l4.500-4.500L10 5.500" stroke="#333" strokeWidth="1.200" /></Icon>
        </button>
      </div>
      <Document />
      <StatusBar />
      <Taskbar />
    </div>
  );
}
